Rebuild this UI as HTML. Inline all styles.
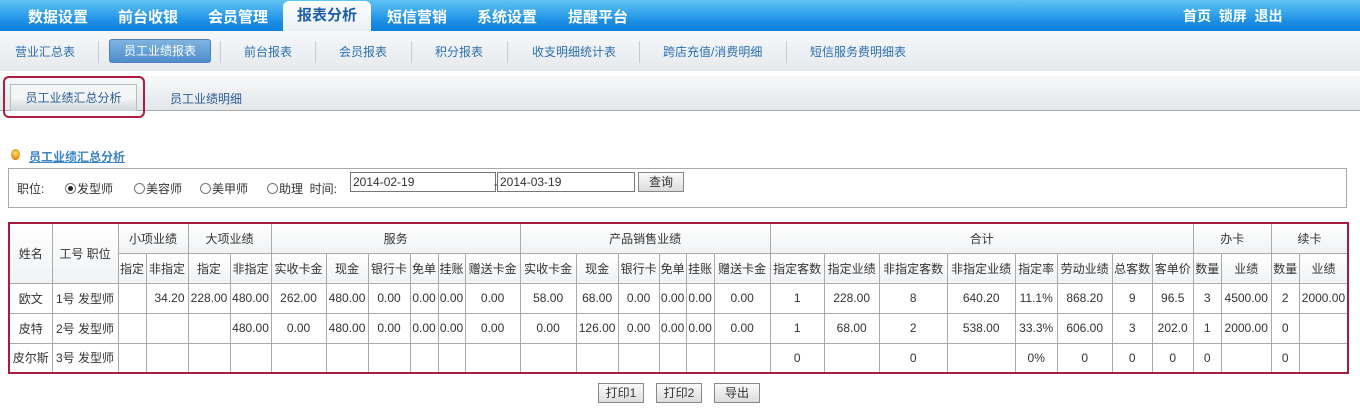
<!DOCTYPE html>
<html><head><meta charset="utf-8"><style>
*{margin:0;padding:0;box-sizing:border-box}
body{width:1360px;height:409px;background:#fff;font-family:"Liberation Sans","Noto Sans CJK SC",sans-serif;font-size:12px;color:#333;position:relative;overflow:hidden}
.top{position:absolute;left:0;top:0;width:1360px;height:31px;background:linear-gradient(#5fc4f5,#1a8ee6 70%,#0d7fdc)}
.top span{position:absolute;top:6px;color:#fff;font-size:15px;font-weight:bold}
.top .act{top:1px;left:283px;width:88px;height:30px;background:linear-gradient(#fff,#e8f0f6);border-radius:6px 6px 0 0;color:#1d5fa8;text-align:center;line-height:30px;font-size:15px;font-weight:bold}
.sub{position:absolute;left:0;top:31px;width:1360px;height:40px;background:linear-gradient(#f6f8fa,#e6eaed)}
.sub span{position:absolute;top:12px;color:#2a6fb0;font-size:12px}
.sub i{position:absolute;top:10px;width:1px;height:22px;background:#ccc}
.sub .on{top:8px;left:109px;width:102px;height:24px;background:linear-gradient(#7fb4e0,#4d8dcb);border:1px solid #4a84c0;border-radius:3px;color:#fff;text-align:center;line-height:22px}
.tabs{position:absolute;left:0;top:76px;width:1360px;height:35px;background:linear-gradient(#f7f8f9,#e3e7ea);border-bottom:1px solid #aaa}
.t1{position:absolute;left:10px;top:8px;width:127px;height:27px;background:linear-gradient(#f3f5f6 50%,#cdd6dc);border:1px solid #bbb;border-bottom:none;text-align:center;line-height:26px;color:#2a5d94}
.t2{position:absolute;left:170px;top:14px;color:#2a5d94}
.red{position:absolute;left:3px;top:76px;width:142px;height:42px;border:2px solid #b01c3f;border-radius:6px}
.title{position:absolute;left:29px;top:148px;color:#3a85c6;font-weight:bold;text-decoration:underline}
.dot{position:absolute;left:11px;top:149px;width:9px;height:11px;border-radius:50%;background:radial-gradient(circle at 50% 40%,#ffe27a,#e08a00 70%,#8a5a00)}
.filter{position:absolute;left:8px;top:168px;width:1339px;height:40px;border:1px solid #aaa}
.filter .l{position:absolute;top:11px}
.rad{display:inline-block;width:11px;height:11px;border:1px solid #777;border-radius:50%;vertical-align:-1px;margin-right:1px;position:relative;background:#fff}
.rad.c:after{content:"";position:absolute;left:2px;top:2px;width:5px;height:5px;border-radius:50%;background:#222}
.inp{position:absolute;top:3px;height:20px;border:1px solid #777;padding-left:2px;line-height:18px;font-size:12px}
.btn{position:absolute;height:20px;border:1px solid #888;background:linear-gradient(#fafafa,#ddd);text-align:center;line-height:18px;font-size:12px}
table{position:absolute;left:8px;top:222px;width:1340px;border-collapse:collapse;table-layout:fixed;border:2px solid #a81c3f}
td{border:1px solid #aaa;text-align:center;font-size:12px;height:30px;padding:0;white-space:nowrap;overflow:hidden}
tr.h td{background:linear-gradient(#fff,#f0f2f4)}
td.r{text-align:right;padding-right:3px}
</style></head><body>
<div class="top">
<span style="left:28px">数据设置</span><span style="left:118px">前台收银</span><span style="left:208px">会员管理</span>
<div class="act" style="position:absolute">报表分析</div>
<span style="left:387px">短信营销</span><span style="left:477px">系统设置</span><span style="left:568px">提醒平台</span>
<span style="left:1183px;font-size:14px">首页&nbsp; 锁屏&nbsp; 退出</span>
</div>
<div class="sub">
<span style="left:15px">营业汇总表</span><i style="left:98px"></i>
<div class="on" style="position:absolute">员工业绩报表</div><i style="left:220px"></i>
<span style="left:244px">前台报表</span><i style="left:315px"></i>
<span style="left:339px">会员报表</span><i style="left:411px"></i>
<span style="left:435px">积分报表</span><i style="left:507px"></i>
<span style="left:532px">收支明细统计表</span><i style="left:639px"></i>
<span style="left:663px">跨店充值/消费明细</span><i style="left:786px"></i>
<span style="left:810px">短信服务费明细表</span>
</div>
<div class="tabs"><div class="t1">员工业绩汇总分析</div><div class="t2">员工业绩明细</div></div>
<div class="red"></div>
<div class="dot"></div><div class="title">员工业绩汇总分析</div>
<div class="filter">
<span class="l" style="left:8px">职位:</span>
<span class="l" style="left:56px"><span class="rad c"></span>发型师</span>
<span class="l" style="left:125px"><span class="rad"></span>美容师</span>
<span class="l" style="left:191px"><span class="rad"></span>美甲师</span>
<span class="l" style="left:258px"><span class="rad"></span>助理&nbsp; 时间:</span>
<div class="inp" style="left:341px;width:146px">2014-02-19</div>
<span class="l" style="left:485px;top:8px">-</span>
<div class="inp" style="left:488px;width:138px">2014-03-19</div>
<div class="btn" style="left:629px;top:3px;width:46px">查询</div>
</div>
<table>
<colgroup><col style="width:43px"><col style="width:66px"><col style="width:28px"><col style="width:42px"><col style="width:42px"><col style="width:41px"><col style="width:55px"><col style="width:42px"><col style="width:42px"><col style="width:28px"><col style="width:27px"><col style="width:55px"><col style="width:56px"><col style="width:42px"><col style="width:41px"><col style="width:27px"><col style="width:28px"><col style="width:56px"><col style="width:54px"><col style="width:55px"><col style="width:68px"><col style="width:68px"><col style="width:42px"><col style="width:55px"><col style="width:40px"><col style="width:41px"><col style="width:28px"><col style="width:50px"><col style="width:28px"><col style="width:49px"></colgroup>
<tr class="h" style="height:29px"><td rowspan="2">姓名</td><td rowspan="2">工号 职位</td><td colspan="2">小项业绩</td><td colspan="2">大项业绩</td><td colspan="6">服务</td><td colspan="6">产品销售业绩</td><td colspan="8">合计</td><td colspan="2">办卡</td><td colspan="2">续卡</td></tr>
<tr class="h"><td>指定</td><td>非指定</td><td>指定</td><td>非指定</td><td>实收卡金</td><td>现金</td><td>银行卡</td><td>免单</td><td>挂账</td><td>赠送卡金</td><td>实收卡金</td><td>现金</td><td>银行卡</td><td>免单</td><td>挂账</td><td>赠送卡金</td><td>指定客数</td><td>指定业绩</td><td>非指定客数</td><td>非指定业绩</td><td>指定率</td><td>劳动业绩</td><td>总客数</td><td>客单价</td><td>数量</td><td>业绩</td><td>数量</td><td>业绩</td></tr>
<tr><td>欧文</td><td>1号 发型师</td><td></td><td class="r">34.20</td><td>228.00</td><td>480.00</td><td>262.00</td><td>480.00</td><td>0.00</td><td>0.00</td><td>0.00</td><td>0.00</td><td>58.00</td><td>68.00</td><td>0.00</td><td>0.00</td><td>0.00</td><td>0.00</td><td>1</td><td>228.00</td><td>8</td><td>640.20</td><td>11.1%</td><td>868.20</td><td>9</td><td>96.5</td><td>3</td><td>4500.00</td><td>2</td><td>2000.00</td></tr>
<tr><td>皮特</td><td>2号 发型师</td><td></td><td></td><td></td><td>480.00</td><td>0.00</td><td>480.00</td><td>0.00</td><td>0.00</td><td>0.00</td><td>0.00</td><td>0.00</td><td>126.00</td><td>0.00</td><td>0.00</td><td>0.00</td><td>0.00</td><td>1</td><td>68.00</td><td>2</td><td>538.00</td><td>33.3%</td><td>606.00</td><td>3</td><td>202.0</td><td>1</td><td>2000.00</td><td>0</td><td></td></tr>
<tr><td>皮尔斯</td><td>3号 发型师</td><td></td><td></td><td></td><td></td><td></td><td></td><td></td><td></td><td></td><td></td><td></td><td></td><td></td><td></td><td></td><td></td><td>0</td><td></td><td>0</td><td></td><td>0%</td><td>0</td><td>0</td><td>0</td><td>0</td><td></td><td>0</td><td></td></tr>
</table>
<div class="btn" style="left:598px;top:383px;width:46px">打印1</div>
<div class="btn" style="left:656px;top:383px;width:46px">打印2</div>
<div class="btn" style="left:714px;top:383px;width:46px">导出</div>
</body></html>
